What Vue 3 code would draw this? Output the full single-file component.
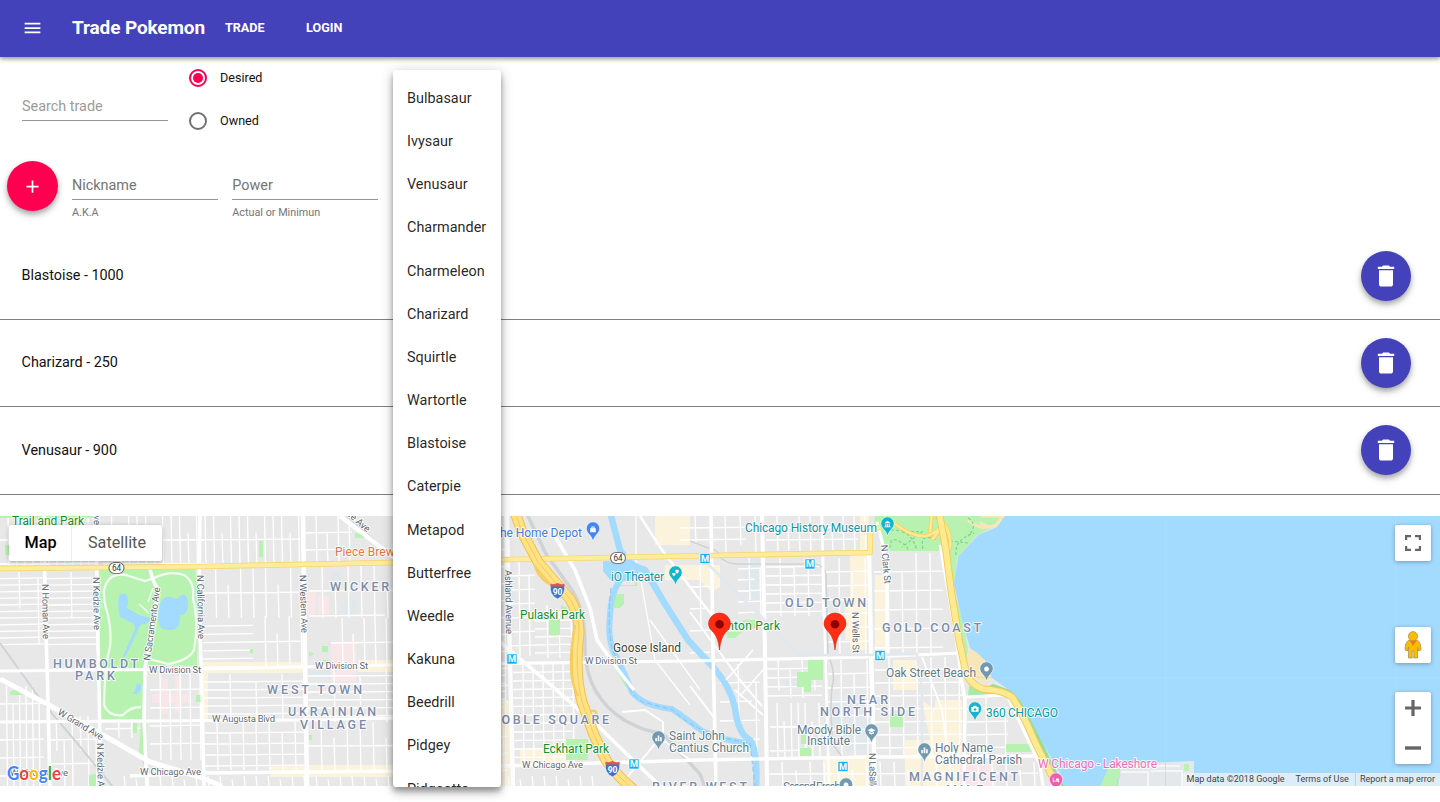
<script setup>
const trades = ['Blastoise - 1000', 'Charizard - 250', 'Venusaur - 900']
const pokemon = [
  'Bulbasaur', 'Ivysaur', 'Venusaur', 'Charmander', 'Charmeleon', 'Charizard', 'Squirtle', 'Wartortle', 'Blastoise',
  'Caterpie', 'Metapod', 'Butterfree', 'Weedle', 'Kakuna', 'Beedrill', 'Pidgey', 'Pidgeotto',
]

// Minor street grids: [left, top, right, bottom, column gap, row gap, column share, row share]
const districts = [
  [0, 572, 44, 645, 19, 6.6, 0.5, 1],
  [46, 572, 97, 650, 25, 6.6, 0.6, 1],
  [0, 516, 97, 568, 8, 24, 1, 1],
  [103, 516, 303, 566, 8.5, 24, 1, 1],
  [203, 568, 303, 618, 12.5, 25, 1, 1],
  [203, 618, 253, 668, 50, 8.2, 1, 1],
  [253, 616, 304, 668, 12, 26, 1, 1],
  [309, 566, 393, 618, 13, 25, 1, 0.9],
  [331, 618, 393, 666, 11, 25, 1, 0.9],
  [305, 516, 352, 564, 11, 17, 1, 1],
  [0, 686, 44, 786, 6.5, 18, 1, 1],
  [48, 716, 98, 786, 8, 24, 0.5, 1],
  [105, 675, 143, 738, 13, 18, 1, 1],
  [150, 672, 202, 760, 10, 18, 1, 1],
  [204, 674, 305, 722, 26, 8, 1, 1],
  [204, 722, 305, 770, 13, 11, 1, 1],
  [308, 668, 505, 722, 26, 8, 1, 1],
  [308, 722, 505, 770, 13, 24, 1, 1],
  [112, 776, 600, 786, 12, 24, 1, 1],
  [509, 562, 535, 656, 10, 14, 1, 1],
  [535, 605, 572, 658, 12, 8, 1, 1],
  [513, 664, 575, 764, 10, 8.5, 1, 1],
  [498, 516, 508, 786, 7, 17, 1, 1],
  [680, 516, 762, 552, 15, 12, 0.8, 0.8],
  [766, 516, 868, 551, 11, 12, 1, 0.9],
  [738, 558, 762, 618, 11, 11, 0.7, 0.7],
  [766, 558, 823, 616, 14, 9, 1, 1],
  [826, 558, 870, 655, 13, 14, 1, 1],
  [874, 553, 943, 655, 14, 19, 1, 1],
  [766, 660, 822, 698, 12, 9, 0.8, 0.8],
  [770, 703, 826, 758, 7, 24, 1, 0.6],
  [828, 660, 871, 757, 13, 14, 1, 1],
  [875, 657, 964, 757, 14, 13, 1, 1],
  [967, 696, 1008, 757, 19, 13, 1, 1],
  [720, 664, 760, 757, 18, 19, 0.6, 0.8],
  [768, 762, 1038, 786, 14, 12, 1, 1],
  [690, 565, 710, 655, 10, 22, 0.7, 0.8],
]

function streetPath([l, t, r, b, gx, gy, sx, sy]) {
  let d = ''
  let i = 0
  for (let x = l + gx; x < r; x += gx) {
    i++
    const end = i % 3 === 1 ? t + (b - t) * sx : b
    const start = i % 4 === 2 ? t + Math.min(gy, (b - t) / 3) : t
    d += `M${x} ${start}L${x + 1} ${end}`
  }
  i = 0
  for (let y = t + gy; y < b; y += gy) {
    i++
    const end = i % 3 === 2 ? l + (r - l) * sy : r
    d += `M${l} ${y}L${end} ${y - 0.8}`
  }
  return d
}
const minorStreets = districts.map(streetPath).join('')

const majorRoads = [
  ['M44 516L45 600L48 700L50 786', 3.6],
  ['M96 516L98 640L101 786', 3.4],
  ['M200 516L199 600L202 690L204 786', 3.4],
  ['M303 516L305 660L307 786', 4.6],
  ['M507 516L509 620L513 786', 4.4],
  ['M711 516L713 650L716 786', 3.6],
  ['M762 516L765 650L767 786', 4],
  ['M822 516L825 640L829 786', 2.6],
  ['M869 550L871 650L875 786', 4.4],
  ['M877 522L883 545L887 590L887 655', 3.2],
  ['M962 683L965 700L964 786', 3.6],
  ['M940 545L955 630L962 683', 3],
  ['M0 671L200 669L393 665L690 661L870 657L960 653', 3.2],
  ['M0 722L145 721L303 720L500 716', 3],
  ['M130 776L200 773L400 771L500 766L700 760L870 757L1040 756', 3.4],
  ['M0 679L47 704L110 739L150 762L200 777L222 786', 5],
  ['M340 516L400 562', 4.5],
  ['M500 642L545 680L600 728L660 786', 3.6],
  ['M550 528L575 570L590 608L597 640L622 675L634 690', 3.6],
  ['M149 566L153 580L158 590L150 640L145 668L144 720L147 786', 3.6],
  ['M966 697L1007 695L1040 765L1043 786', 3.2],
  ['M640 516L662 550L700 600L716 620', 2.4],
  ['M690 612L740 680L762 706', 2],
  ['M690 686L716 720', 2],
  ['M740 696L763 670M735 690L763 715M726 680L753 650', 1.7],
  ['M640 575L655 660L690 705M636 563L636 516M650 620L700 690', 1.3],
  ['M625 780L660 738L690 760M622 712L645 710L663 722V735', 1.8],
  ['M922 657L942 710L948 755', 2],
]

const beige = [
  'M203 662H303V673H203ZM358 660H393V672H358Z',
  'M270 765H393V777H270ZM202 662H208V720H202Z',
  'M499 700H512V786H499ZM520 750H570V764H520Z',
  'M655 516H690V545H655ZM665 565H720V587L711 592L700 580H665Z',
  'M850 555H867V650H850ZM845 600H853V640H845Z',
  'M823 757H873V786H823ZM860 516H869V550H860Z',
  'M893 660H917V690H893ZM935 700H962V740H935ZM875 575H887V650H875Z',
  'M905 740H960V786H905ZM922 700L943 715V740H930Z',
]

const pinkAreas = 'M307 591h9v24h-9zM318 596h11v18h-11zM331 642h25v40h-25zM152 694h37v9h-37zM160 678h8v36h-8zM175 676h7v36h-7zM960 760h36v26h-36z'
const blueAreas = 'M331 571h10v12h-10zM344 599h12v16h-12zM308 669h22v10h-22zM745 560l15-4v50l-14-10zM785 677h13v12h-13zM830 700h22v35h-22zM848 700h20v50h-20z'

const highway = 'M515 512L522 532L538 562L556 583L570 599Q579 613 579 632Q574 672 582 702L594 735L606 760Q616 775 634 790'
const shoreDrive = 'M939 512L946 550L951 590L959 640L965 668Q968 684 983 689Q1003 690 1012 697Q1022 711 1035 742L1053 778L1058 788'
const northAve = 'M0 568.5L200 566.5L393 562.5L510 559.5L690 556L870 552.5L870 531L880 527'

// text, x, y, rendered width, variant, rotation
const labels = [
  ['Trail and Park', 12, 525, 72, 'park'],
  ['Pulaski Park', 520, 619, 65, 'park'],
  ['Eckhart Park', 543, 753, 66, 'park'],
  ['Stanton Park', 709, 630, 71, 'park'],
  ['HUMBOLDT', 53, 668, 85, 'area'],
  ['PARK', 75, 680, 40, 'area'],
  ['WICKER', 330, 590.5, 59, 'area'],
  ['WEST TOWN', 267, 693.5, 95, 'area'],
  ['UKRAINIAN', 288, 716, 88, 'area'],
  ['VILLAGE', 300, 729, 66, 'area'],
  ['NOBLE SQUARE', 490, 723.5, 119, 'area'],
  ['OLD TOWN', 785, 606.5, 81, 'area'],
  ['GOLD COAST', 882, 632, 99, 'area'],
  ['NEAR', 847, 704, 41, 'area'],
  ['NORTH SIDE', 820, 716, 95, 'area'],
  ['RIVER WEST', 652, 791, 95, 'area'],
  ['MAGNIFICENT', 909, 781, 109, 'area'],
  ['MILE', 946, 794, 37, 'area'],
  ['W Division St', 149, 673, 52, 'road'],
  ['W Division St', 315, 669, 53, 'road'],
  ['W Division St', 585, 664, 52, 'road'],
  ['W Augusta Blvd', 212, 722, 63, 'road'],
  ['W Chicago Ave', 140, 775, 61, 'road'],
  ['W Chicago Ave', 10, 776, 58, 'road'],
  ['W Chicago Ave', 522, 768, 61, 'road'],
  ['N Homan Ave', 42, 584, 55, 'road', 89],
  ['N Kedzie Ave', 93, 577, 53, 'road', 89],
  ['N Kedzie Ave', 97, 743, 53, 'road', 89],
  ['N California Ave', 197, 575, 64, 'road', 89],
  ['N Western Ave', 299.5, 575, 58, 'road', 88],
  ['Ashland Avenue', 505, 570, 64, 'road', 89],
  ['N Sacramento Ave', 150, 661, 74, 'road', -82],
  ['W Grand Ave', 57, 714, 51, 'road', 31],
  ['Milwaukee Ave', 320, 492, 62, 'road', 41],
  ['N Kedzie Ave', 93, 472, 53, 'road', 89],
  ['N Clark St', 881, 545, 39, 'road', 85],
  ['N Wells St', 852, 612, 41, 'road', 89],
  ['N LaSalle St', 869, 753, 47, 'road', 89],
  ['Goose Island', 613, 651.5, 68, 'dark'],
  ['Piece Brewery', 335, 556, 76, 'food'],
  ['The Home Depot', 493, 536.5, 89, 'shop'],
  ['iO Theater', 611, 581, 53, 'teal'],
  ['Chicago History Museum', 745, 532, 132, 'teal'],
  ['360 CHICAGO', 986, 717, 72, 'teal'],
  ['Oak Street Beach', 886, 676.5, 90, 'poi'],
  ['Saint John', 669, 739.5, 56, 'poi'],
  ['Cantius Church', 669, 751.5, 80, 'poi'],
  ['Moody Bible', 797, 733.5, 64, 'poi'],
  ['Institute', 807, 745, 43, 'poi'],
  ['Holy Name', 935, 752, 58, 'poi'],
  ['Cathedral Parish', 935, 763.5, 87, 'poi'],
  ['Second Presb', 783, 791, 58, 'poi'],
  ['W Chicago - Lakeshore', 1038, 767.5, 119, 'hotel'],
]

const metros = [[512, 659], [634, 764], [705, 558.5], [810, 564], [880, 655.5], [843, 766.5]]
const places = [
  [593, 541, '#4285f4', 'bag'], [675.5, 585, '#12b5cb', 'mask'], [887.5, 536, '#12b5cb', 'museum'], [975, 721, '#12b5cb', 'camera'],
  [986.5, 681, '#7199af', 'dot'], [658.5, 750, '#7199af', 'bars'], [871.5, 743, '#7199af', 'cap'], [924.5, 762, '#7199af', 'bars'],
  [846, 797, '#7199af', 'dot'], [1056, 792, '#f25cb0', 'bed'],
]
const glyphs = {
  bag: 'M-3.5-1h7v5h-7zM-2-1v-2h4v2h-1v-1h-2v1z',
  mask: 'M-4 0h4v2l-2 2-2-2zM0-4h4v3l-2 2-2-2z',
  museum: 'M-4-1L0-4L4-1zM-3 0h1.5v3h-1.5zM-.7 0H.7v3H-.7zM1.5 0H3v3H1.5zM-4 3h8v1h-8z',
  camera: 'M-4.500-2.500h2l1-1.500h3l1 1.500h2v6h-9zM0-1a1.600 1.600 0 1 0 .01 0z',
  dot: 'M0-3a3 3 0 1 0 .01 0z',
  bars: 'M-4 0h2v4h-2zM-1-3h2v7h-2zM2-1h2v5h-2z',
  cap: 'M-5-1L0-3.5L5-1L0 1.5zM-3 1L0 2.5L3 1v2L0 4.5L-3 3z',
  bed: 'M-4-3h1v4h7v2h-1v-1h-6v1h-1zM0-2h3l1 1v1.500H0z',
}
const pins = [719.5, 835]
const shields = [[557.5, 590], [612.5, 768]]
const routes = [[116.5, 568], [618, 558]]
</script>

<template>
  <div class="page">
    <header class="toolbar">
      <button class="menu-button" aria-label="Menu">
        <svg viewBox="0 0 24 24"><path d="M3 18h18v-2H3v2zm0-5h18v-2H3v2zm0-7v2h18V6H3z" /></svg>
      </button>
      <h1>Trade Pokemon</h1>
      <nav><a>TRADE</a><a>LOGIN</a></nav>
    </header>

    <section class="search-row">
      <div class="field"><span class="placeholder">Search trade</span></div>
      <div class="radios">
        <label class="radio"><i class="ring checked"></i>Desired</label>
        <label class="radio"><i class="ring"></i>Owned</label>
      </div>
    </section>

    <section class="create-row">
      <button class="fab add" aria-label="Add">
        <svg viewBox="0 0 24 24"><path d="M19 13h-6v6h-2v-6H5v-2h6V5h2v6h6v2z" /></svg>
      </button>
      <div class="labelled">
        <div class="field dark-label">Nickname</div>
        <small>A.K.A</small>
      </div>
      <div class="labelled">
        <div class="field dark-label">Power</div>
        <small>Actual or Minimun</small>
      </div>
    </section>

    <ul class="trades">
      <li v-for="trade in trades" :key="trade">
        <span>{{ trade }}</span>
        <button class="fab remove" aria-label="Delete">
          <svg viewBox="0 0 24 24"><path d="M6 19c0 1.100.9 2 2 2h8c1.100 0 2-.9 2-2V7H6v12zM19 4h-3.500l-1-1h-5l-1 1H5v2h14V4z" /></svg>
        </button>
      </li>
    </ul>

    <section class="map">
      <svg class="canvas" viewBox="0 516 1440 270">
        <rect y="516" width="1440" height="270" fill="#e8e8e8" />
        <path v-for="d in beige" :key="d" :d="d" fill="#fcf3dc" />
        <path :d="pinkAreas" fill="#f9e6e8" />
        <path :d="blueAreas" fill="#e1e8ec" />
        <path :d="minorStreets" class="minor" />

        <g class="green">
          <path d="M99 568H195L199 590L197 666L146 665L145 719H101Z" />
          <path d="M5 545h5v10H5zM0 516H97V518H0zM259 541h4v16h-4zM355 533h9v5h-9zM10 692l5-3 8 6H10zM133 723h4v10h-4zM141 720l5 0 2 46-4 0-5-13zM196 695h5v7h-5zM89 775l7-1 0 12h-7z" />
          <path d="M322 646h6v6h-6zM309 651l5 3-5 3zM323 660h5v2h-5zM250 649h3v4h-3zM309 735h3v5h-3z" />
          <path d="M549 619h11v16h-11zM561 605l6 3v8h-6zM566 739h22v21h-22zM614 594h10v10l-4 4h-6zM620 585h15v-17h2v18h-17zM616 667l10 10 2 12-4-5-10-17z" />
          <path d="M728 628h31v-8h-15l-4 5h-11zM742 632h-15v6h8zM808 659h15v21h-12v12h-7v-5h-7v-15h11zM801 734h5v10h-5zM800 748h11v8h-11zM890 714h13v13h-13zM1006 744h24l4 8h-28z" />
          <path d="M875 516H1003L998 525L977 535L957 558L954 590L964 625L968 650L965 666L950 590L941 551L887 551L874 525Z" />
        </g>
        <g class="park-ways">
          <path d="M104 590Q108 572 126 575L145 581L154 578Q170 570 184 575Q195 582 193 598Q199 622 194 650Q189 660 169 664L149 659M104 590Q103 600 108 615Q113 641 108 655Q104 683 104 705Q109 717 123 715Q130 707 141 707" stroke-width="2.300" />
          <path d="M139 604Q146 610 149 614M153 588L148 602" stroke-width="1.500" />
        </g>
        <g class="water">
          <path d="M118 598q3-7 9-3q2 7 0 13l12 7 12 3-3 5-8 2q-5 13-15 32l-2-1 12-27-1-5-14-7q-3-12-1-20zM159 608q3-14 12-11 7 4 9-1q7-4 8 6q0 14-8 13 1 14-9 15l-9-1q-6-8-3-21zM132 693l3-2 2-8 4 2q1 8-6 9z" />
          <path d="M1004 510L1002 520L997 527L978 535L958 557L954 584L962 620L970 648L985 660L992 678L1009 690L1020 700L1034 728L1060 773L1064 790H1440V510Z" />
        </g>
        <path d="M970 649Q985 654 991 679L987 683Q977 682 971 672Q965 662 970 649Z" fill="#f7e7b8" />
        <path d="M981 516H1003L996 525Q987 529 980 522M968 520Q982 532 995 525" fill="none" stroke="#f7e7b8" stroke-width="3" />
        <path d="M993 684L1010 690L1020 700L1037 732L1064 786H1057L1033 737L1014 699L1002 692L983 689Z" fill="#8fe09a" />
        <path d="M969 686L995 694L968 696Z" fill="#a5eaa7" />
        <path d="M890 548q0-12 9-7t9 9M902 532q9 1 15 18M923 549q-4-17 14-9M956 555q-2-15 18-22M968 518q11 7 0 18M891 530l31 2-20 15M950 541l20 2" fill="none" stroke="#7ed38d" stroke-width="1.200" stroke-dasharray="3 2" />
        <g class="river">
          <path d="M610 512L620 550Q628 566 645 570L665 604L688 640L714 668Q731 688 735 708Q738 734 750 740Q758 750 756 790" stroke-width="6.500" />
          <path d="M622 578Q611 590 610 616Q607 641 616 656Q626 676 632 692Q643 706 672 709Q684 717 702 731Q723 741 750 743" stroke-width="6" />
        </g>
        <path d="M603 561L620 562L640 565L638 575L632 580L612 582L603 571Z" fill="#a3daff" />
        <path d="M611 588Q606 638 615 655Q627 694 643 702L673 710Q699 736 750 743L755 786" fill="none" stroke="#8ac4ed" stroke-width="1" stroke-dasharray="5 3" />

        <g class="rail">
          <path d="M0 643L43 703L77 743L113 787" />
          <path d="M526 512L546 554L572 590Q586 613 585 652Q587 696 624 720Q645 732 662 733L700 774L706 790" stroke-width="3.500" />
          <path d="M346 516L393 556M690 541L708 548Q718 549 721 558Q728 565 745 564L815 564Q825 566 826 575L828 655Q835 670 833 682Q829 700 833 745L843 758" stroke-width="1.600" />
        </g>
        <g class="major">
          <path v-for="[d, w] in majorRoads" :key="d" :d="d" :stroke-width="w" />
        </g>
        <path d="M690 546L740 596L800 655L870 655L917 654L922 690V786" fill="none" stroke="#e2e8ef" stroke-width="2.500" />
        <g class="highway">
          <path :d="northAve" stroke="#f8d56b" stroke-width="5.600" />
          <path :d="northAve" stroke="#ffed9d" stroke-width="4" />
          <path d="M894 523Q911 537 926 536Q934 534 941 527M932 512L930 532M941 528L932 540M944 523Q954 540 948 554" stroke="#f8cc58" stroke-width="4" />
          <path d="M894 523Q911 537 926 536Q934 534 941 527M932 512L930 532M941 528L932 540M944 523Q954 540 948 554" stroke="#ffe991" stroke-width="2.600" />
          <path :d="highway" stroke="#f4c04c" stroke-width="11" />
          <path :d="highway" stroke="#ffe283" stroke-width="9" />
          <path :d="highway" stroke="#f5ca5b" stroke-width="1" />
          <path d="M535 566Q540 581 556 587M575 625Q571 645 571 664Q571 684 578 696M591 711Q599 709 595 719" stroke="#f6cd61" stroke-width="2.500" />
          <path :d="shoreDrive" stroke="#f4ca56" stroke-width="7.500" />
          <path :d="shoreDrive" stroke="#ffea91" stroke-width="5.700" />
        </g>
        <path d="M1120 764L1194 761V786H1118Z" fill="#e5e8ea" />
        <path d="M1100 786L1110 765L1120 763V779H1117V786ZM1184 764h5v7h-5z" fill="#b9f2b4" />
        <path d="M1118 766H1180M1121 772H1148V786M1151 771H1182V786" fill="none" stroke="#f6f6f6" stroke-width="2" />
        <path d="M1165.500 516V786M1395.500 516V786M965 677.500H1440" fill="none" stroke="#b1dcf6" stroke-width=".7" />

        <g v-for="([x, y], i) in routes" :key="'r' + i" :transform="`translate(${x} ${y})`">
          <rect x="-7.500" y="-5.500" width="15" height="11" rx="5.500" fill="#fff" stroke="#777" stroke-width="1.200" />
          <text x="-4.500" y="3.200" class="route">64</text>
        </g>
        <g v-for="([x, y], i) in shields" :key="'s' + i" :transform="`translate(${x} ${y})`">
          <path d="M-7-6Q-4-4 0-6Q4-4 7-6Q9 5 0 9Q-9 5-7-6Z" fill="#3b74cb" stroke="#fff" stroke-width=".7" />
          <path d="M-7-6.500Q-4-5 0-7Q4-5 7-6.500L7.200-3.500H-7.200Z" fill="#e2584d" />
          <text x="-4.800" y="4.500" class="interstate">90</text>
        </g>
        <text
          v-for="([text, x, y, width, kind, angle], i) in labels" :key="'l' + i" :x="x" :y="y" :textLength="width"
          :class="['label', kind]" :transform="angle ? `rotate(${angle} ${x} ${y})` : null"
        >{{ text }}</text>
        <g v-for="([x, y], i) in metros" :key="'m' + i" :transform="`translate(${x} ${y})`">
          <rect x="-5" y="-5" width="10" height="10" fill="#0fb3f5" stroke="#fff" stroke-width=".6" />
          <text x="-3.900" y="3.300" class="metro">M</text>
        </g>
        <g v-for="([x, y, color, glyph], i) in places" :key="'p' + i" :transform="`translate(${x} ${y})`">
          <path d="M0 0Q-1-4-4.500-7.500A6.700 6.700 0 1 1 4.500-7.500Q1-4 0 0Z" :fill="color" stroke="#fff" stroke-width=".6" />
          <path :d="glyphs[glyph]" fill="#fff" fill-rule="evenodd" transform="translate(0 -12) scale(.8)" />
        </g>
        <g v-for="x in pins" :key="x" :transform="`translate(${x} 650)`">
          <path d="M0 0Q-1-12-6-17.500Q-11-22-11-26A11 11 0 0 1 11-26Q11-22 6-17.500Q1-12 0 0Z" fill="#ff2d14" stroke="#dc220d" stroke-width=".6" />
          <circle cy="-25.700" r="4.300" fill="#8c0000" />
        </g>
        <text class="google" x="7" y="779.500" textLength="54" lengthAdjust="spacingAndGlyphs"><tspan fill="#4285f4">G</tspan><tspan fill="#ea4335">o</tspan><tspan fill="#fbbc05">o</tspan><tspan fill="#4285f4">g</tspan><tspan fill="#34a853">l</tspan><tspan fill="#ea4335">e</tspan></text>
      </svg>

      <div class="map-type"><b>Map</b><span>Satellite</span></div>
      <div class="controls">
        <button class="control" aria-label="Fullscreen">
          <svg viewBox="0 0 18 18"><path d="M1 1h6v2.200H3.200V6H1zM11 1h6v5h-2.200V3.200H11zM1 12h2.200v2.800H7V17H1zM14.800 12H17v5h-6v-2.200h3.800z" /></svg>
        </button>
        <button class="control person" aria-label="Street View">
          <svg viewBox="0 0 18 28">
            <path d="M5 9Q1 11 1 19L3.500 20L4.500 16V27H8.200V20H9.800V27H13.500V16L14.500 20L17 19Q17 11 13 9Z" fill="#fbbc05" stroke="#a8874a" stroke-width=".7" />
            <path d="M5.500 9.500H12.500L9 15Z" fill="#f2790b" />
            <circle cx="9" cy="5.200" r="4.600" fill="#fbbc05" stroke="#b39455" stroke-width=".8" />
          </svg>
        </button>
        <div class="zoom">
          <svg viewBox="0 0 18 18"><path d="M1 7.400h6.400V1h3.200v6.400H17v3.200h-6.400V17H7.400v-6.400H1z" /></svg>
          <svg viewBox="0 0 18 18"><path d="M1 7.300h16v3.400H1z" /></svg>
        </div>
      </div>
      <footer class="credits"><span>Map data ©2018 Google</span><span>Terms of Use</span><span class="report">Report a map error</span></footer>
    </section>

    <ul class="dropdown">
      <li v-for="name in pokemon" :key="name">{{ name }}</li>
    </ul>
  </div>
</template>

<style>
html, body { margin: 0; background: #fff; overflow: hidden; }
</style>

<style scoped>
*, *::before, *::after { box-sizing: border-box; }
.page { position: relative; width: 100%; height: 802px; overflow: hidden; font-family: Roboto, sans-serif; font-size: 14.4px; color: rgba(0, 0, 0, 0.87); background: #fff; }
button { border: 0; padding: 0; }
ul { list-style: none; margin: 0; padding: 0; }
svg { display: block; }

.toolbar { height: 57px; display: flex; align-items: center; padding: 0 0 2px 22px; background: #4442bb; color: #fff; box-shadow: 0 2px 4px rgba(0, 0, 0, 0.3), 0 1px 6px rgba(0, 0, 0, 0.18); }
.menu-button { width: 21px; height: 22px; background: none; }
.menu-button svg { width: 21px; height: 22px; fill: #fff; }
h1 { margin: 0 0 0 29px; width: 133px; font-size: 19px; line-height: 24px; font-weight: 700; letter-spacing: -0.12px; white-space: nowrap; }
nav { display: flex; margin-left: 20px; gap: 41.500px; font-size: 12.600px; font-weight: 700; }

.search-row { height: 87px; display: flex; padding-left: 22px; gap: 20px; }
.field { width: 146px; height: 24px; border-bottom: 1px solid #949494; line-height: 20px; color: #757575; }
.search-row .field { margin-top: 40px; }
.placeholder { color: #9b9b9b; }
.radios { padding-top: 11px; }
.radio { display: flex; align-items: center; gap: 12px; height: 20px; line-height: 18px; padding-bottom: 1px; font-size: 12.600px; margin-bottom: 23px; color: #111; }
.ring { width: 20px; height: 20px; display: grid; place-items: center; }
.ring::before { content: ''; grid-area: 1 / 1; width: 18px; height: 18px; border: 2px solid #717171; border-radius: 50%; }
.ring.checked::before { border-color: #ff0050; }
.ring.checked::after { content: ''; grid-area: 1 / 1; width: 10px; height: 10px; border-radius: 50%; background: #ff0050; }

.create-row { height: 88.800px; display: flex; padding: 17px 0 0 7px; gap: 14px; }
.fab { display: grid; place-items: center; width: 50px; height: 50px; border-radius: 50%; box-shadow: 0 3px 5px rgba(0, 0, 0, 0.25), 0 4px 9px rgba(0, 0, 0, 0.15); }
.fab svg { fill: #fff; }
.add { width: 51px; background: #ff0050; }
.add svg { width: 21px; }
.labelled { padding-top: 15px; width: 146.300px; }
small { display: block; margin-top: 5px; font-size: 10.800px; line-height: 16px; color: #757575; }

.trades li { height: 87.250px; padding: 0 29px 0 21.600px; display: flex; align-items: center; justify-content: space-between; border-bottom: 1px solid #818181; }
.trades span { position: relative; top: -0.400px; color: #111; letter-spacing: -0.03px; }
.remove { background: #4442bb; }
.remove svg { width: 28px; }

.map { position: relative; height: 270px; margin-top: 21.450px; overflow: hidden; }
.canvas { width: 1440px; height: 270px; }
.minor { fill: none; stroke: #fff; stroke-width: 1.300; }
.major { fill: none; stroke: #fff; stroke-linejoin: round; }
.park-ways { fill: none; stroke: #f4fbf1; }
.green { fill: #b8f2b1; }
.water { fill: #a3daff; }
.river { fill: none; stroke: #a3daff; stroke-linejoin: round; }
.rail { fill: none; stroke: #d0d3d6; stroke-width: 2; }
.highway { fill: none; stroke-linejoin: round; }
.label { font-size: 12px; font-weight: 400; paint-order: stroke; stroke: rgba(255, 255, 255, 0.85); stroke-width: 2px; stroke-linejoin: round; }
.road { font-size: 9.500px; fill: #5d6875; }
.area { font-size: 12.500px; font-weight: 500; fill: #7a8baa; }
.park { fill: #16902b; }
.dark { fill: #424536; }
.food { fill: #ea7442; }
.shop { fill: #427bdc; }
.teal { fill: #0b97a5; }
.poi { fill: #5d7b8c; }
.hotel { fill: #f06cb8; }
.route { font-size: 8.200px; fill: #333; }
.interstate { font-size: 8.500px; font-weight: 700; fill: #fff; }
.metro { font-size: 9.200px; font-weight: 700; fill: #fff; }
.google { font-family: Lato, sans-serif; font-size: 19px; font-weight: 700; paint-order: stroke; stroke: #fff; stroke-width: 2px; }

.map-type { position: absolute; left: 9px; top: 9px; display: flex; height: 36px; line-height: 35px; font-size: 16.200px; background: #fff; border-radius: 2px; box-shadow: 0 1px 4px rgba(0, 0, 0, 0.3); color: #565656; }
.map-type b { width: 62px; padding-left: 1px; text-align: center; font-weight: 500; color: #000; }
.map-type span { width: 91px; text-align: center; border-left: 1px solid #eee; }
.controls { position: absolute; top: 9px; right: 9px; display: flex; flex-direction: column; }
.control, .zoom { width: 36px; background: #fff; border-radius: 2px; box-shadow: 0 1px 4px rgba(0, 0, 0, 0.3); fill: #666; }
.control { height: 36px; display: grid; place-items: center; }
.control svg { width: 18px; fill: #666; }
.person { margin-top: 66px; }
.person svg { width: 18px; height: 28px; }
.zoom { margin-top: 29px; height: 72px; display: flex; flex-direction: column; align-items: center; gap: 22px; padding-top: 7px; }
.zoom svg { width: 18px; }
.credits { position: absolute; right: 0; bottom: 0; height: 13px; display: flex; font-size: 9px; line-height: 13px; color: #444; background: rgba(245, 245, 245, 0.7); white-space: nowrap; }
.credits span { padding: 0 6px 0 5px; }
.credits .report { padding: 0 5px 0 4px; border-left: 1px solid #a3daff; }

.dropdown { position: absolute; left: 393px; top: 70px; width: 108px; height: 717px; padding: 7px 0 0 14px; overflow: hidden; background: #fff; border-radius: 3px; box-shadow: 0 4px 5px rgba(0, 0, 0, 0.25), 0 7px 9px rgba(0, 0, 0, 0.12), 0 2px 14px rgba(0, 0, 0, 0.2); }
.dropdown li { height: 43.170px; line-height: 43.170px; letter-spacing: 0.02px; }
</style>
